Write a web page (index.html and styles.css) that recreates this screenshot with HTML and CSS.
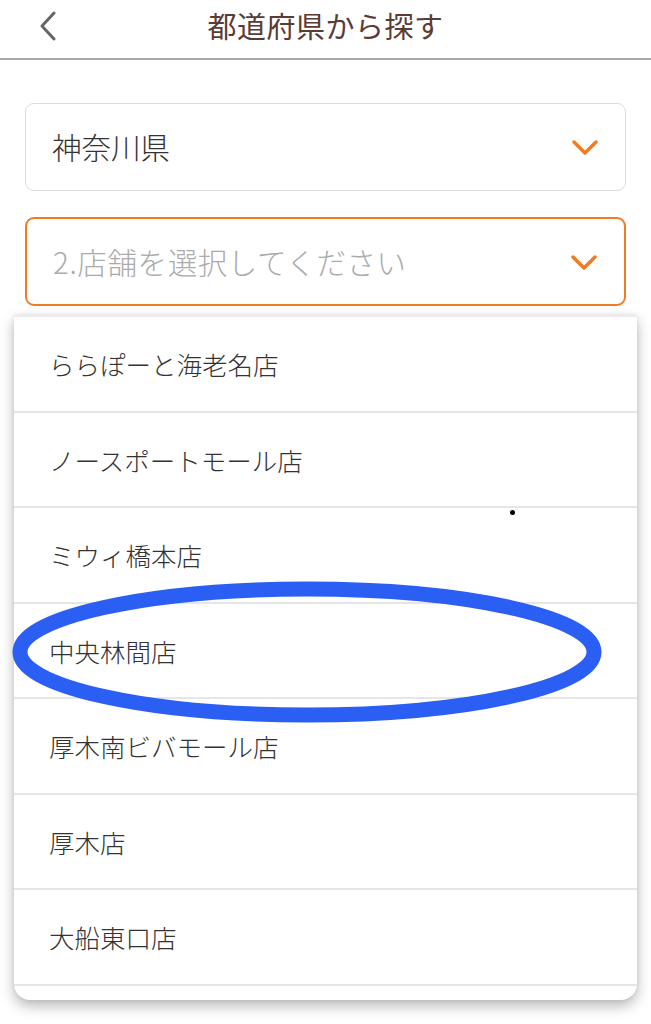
FILE: index.html
```html
<!DOCTYPE html>
<html>

<head>
  <meta charset="utf-8">
  <link rel="stylesheet" href="styles.css">
  <title>都道府県から探す</title>
</head>

<body>
  <div class="page">
    <header class="topbar">
      <a class="back" href="#">
        <svg width="20" height="30" viewBox="0 0 20 30">
          <path d="M16 2 L4 15 L16 28" fill="none" stroke="#666" stroke-width="3" stroke-linecap="round" stroke-linejoin="round"/>
        </svg>
      </a>
      <h1 class="title">都道府県から探す</h1>
    </header>

    <div class="form">
      <div class="select">
        <span class="value">神奈川県</span>
        <svg class="chevron" width="26" height="16" viewBox="0 0 26 16">
          <path d="M2 2 L13 13 L24 2" fill="none" stroke="#f47a1f" stroke-width="3.5" stroke-linecap="round" stroke-linejoin="round"/>
        </svg>
      </div>
      <div class="select open">
        <span class="value placeholder">2.店舗を選択してください</span>
        <svg class="chevron" width="26" height="16" viewBox="0 0 26 16">
          <path d="M2 2 L13 13 L24 2" fill="none" stroke="#f47a1f" stroke-width="3.5" stroke-linecap="round" stroke-linejoin="round"/>
        </svg>
      </div>
    </div>

    <ul class="options">
      <li>ららぽーと海老名店</li>
      <li>ノースポートモール店</li>
      <li>ミウィ橋本店</li>
      <li>中央林間店</li>
      <li>厚木南ビバモール店</li>
      <li>厚木店</li>
      <li>大船東口店</li>
      <li class="more"></li>
    </ul>

    <!-- hand drawn marks over the screenshot -->
    <svg class="circle-mark" width="610" height="160" viewBox="0 0 610 160">
      <ellipse cx="298" cy="80" rx="287" ry="63" fill="none" stroke="#2b5ef2" stroke-width="15"/>
    </svg>
    <span class="dot"></span>
  </div>
</body>

</html>
```

FILE: styles.css
```css
html,
body {
  margin: 0;
  padding: 0;
  background: #ffffff;
  font-family: "Noto Sans CJK JP", "Noto Sans", sans-serif;
  font-weight: 300;
}

.page {
  position: relative;
  width: 651px;
  height: 1024px;
  overflow: hidden;
}

.topbar {
  position: relative;
  height: 58px;
  border-bottom: 2px solid #a9a9a9;
  display: flex;
  justify-content: center;
}

.back {
  position: absolute;
  left: 38px;
  top: 11px;
  display: flex;
}

.title {
  margin: 0;
  font-size: 29px;
  font-weight: 400;
  line-height: 50px;
  color: #5a3b35;
  letter-spacing: 0.5px;
}

.form {
  padding: 43px 25px 0;
  display: flex;
  flex-direction: column;
  gap: 26px;
}

.select {
  height: 86px;
  border: 1.5px solid #dcdcdc;
  border-radius: 9px;
  display: flex;
  align-items: center;
  justify-content: space-between;
  padding: 0 27px 0 26px;
}

.select.open {
  border: 2px solid #f47a1f;
  height: 85px;
}

.value {
  font-size: 29.5px;
  color: #333333;
  padding-bottom: 2px;
}

.placeholder {
  color: #ababab;
  letter-spacing: 0.6px;
}

.chevron {
  margin-top: 2px;
}

.options {
  list-style: none;
  margin: 9px 14px 0;
  padding: 0;
  background: #ffffff;
  border-top: 2px solid #ececec;
  border-radius: 0 0 16px 16px;
  box-shadow: 0 6px 14px rgba(0, 0, 0, 0.28), 0 0 4px rgba(0, 0, 0, 0.08);
}

.options li {
  height: 93.5px;
  border-bottom: 2px solid #e6e6e6;
  padding-left: 35px;
  display: flex;
  align-items: center;
  font-size: 25.5px;
  color: #333333;
}

.options li.more {
  height: 14px;
  border-bottom: none;
}

.circle-mark {
  position: absolute;
  left: 9px;
  top: 572px;
}

.dot {
  position: absolute;
  left: 510px;
  top: 510px;
  width: 5px;
  height: 5px;
  border-radius: 50%;
  background: #000000;
}
```
